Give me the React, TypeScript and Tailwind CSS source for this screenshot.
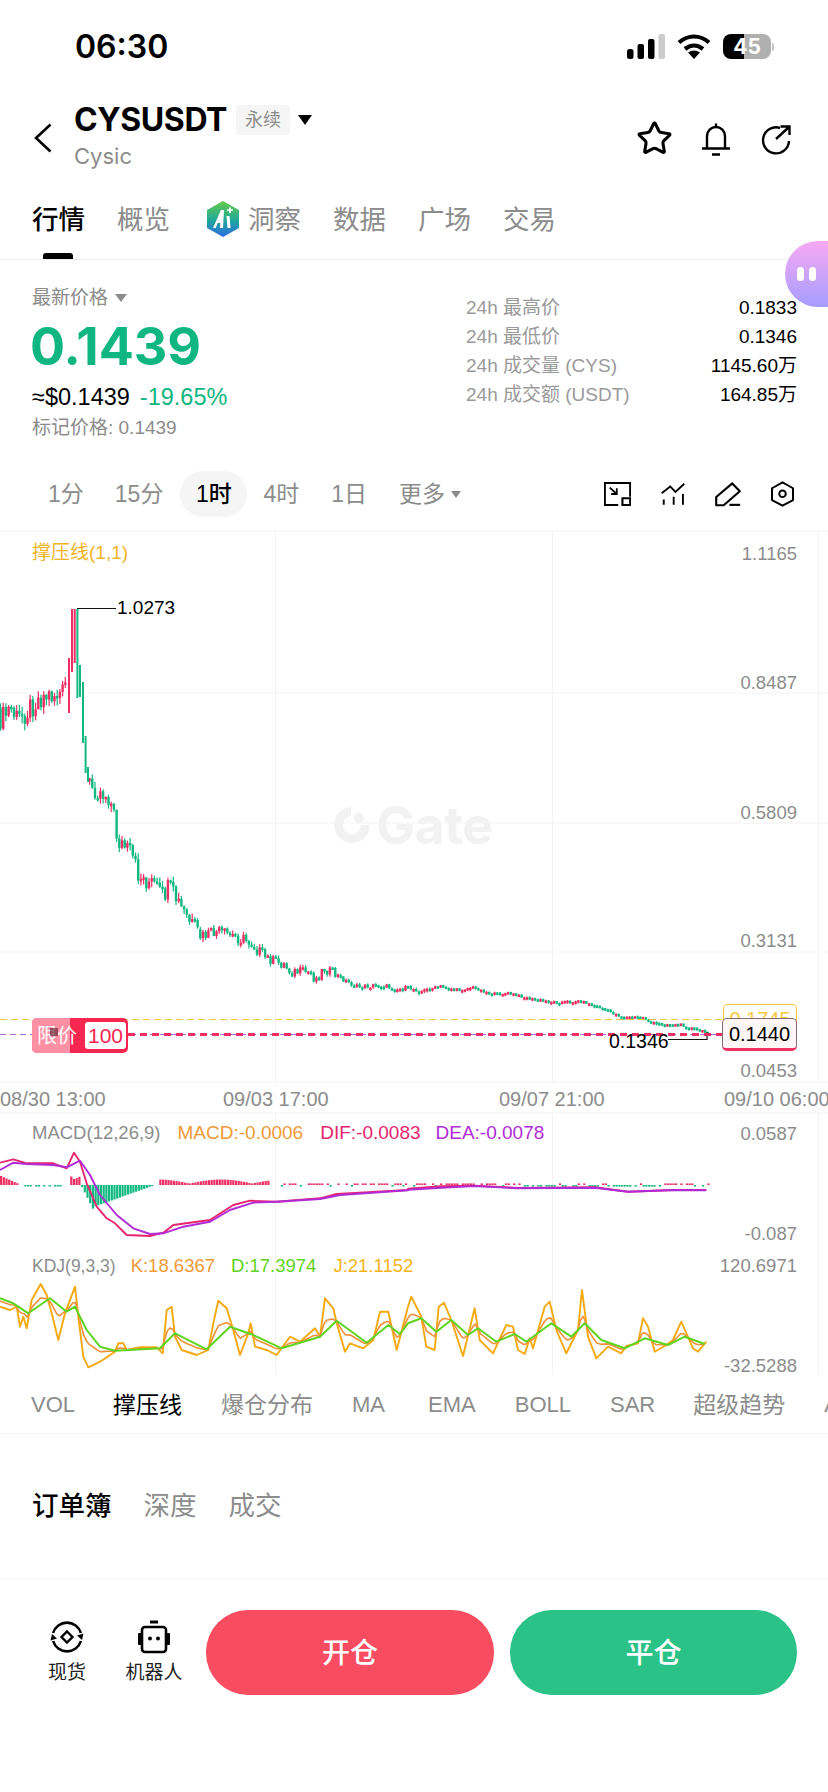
import React from "react"
import { Star } from "lucide-react"

type Pt = [number, number]

const interp = (pts: Pt[], x: number) => {
  if (x <= pts[0][0]) return pts[0][1]
  for (let i = 1; i < pts.length; i++) {
    if (x <= pts[i][0]) {
      const [x0, y0] = pts[i - 1]
      const [x1, y1] = pts[i]
      return y0 + ((y1 - y0) * (x - x0)) / (x1 - x0)
    }
  }
  return pts[pts.length - 1][1]
}

const rnd = (i: number) => {
  const v = Math.sin(i * 12.9898) * 43758.5453
  return v - Math.floor(v)
}

const PITCH = 2.7
const RED = "#ee2f63"
const GREEN = "#11b981"

// price curve read off the chart, in page pixels
const pricePts: Pt[] = [
  [0, 720], [7, 717], [13, 707], [20, 720], [30, 710], [43, 697], [67, 693], [69, 680],
  [89, 782], [100, 790], [112, 797], [117, 817], [120, 840], [133, 853], [142, 877],
  [157, 885], [165, 897], [172, 888], [185, 910], [193, 923], [203, 937], [220, 932],
  [233, 935], [253, 942], [267, 957], [287, 965], [293, 972], [313, 972], [318, 980],
  [327, 968], [347, 980], [360, 987], [383, 985], [400, 989], [413, 988], [425, 991],
  [443, 986], [461, 990], [475, 987], [495, 994], [511, 993], [535, 999], [558, 1002],
  [583, 1001], [605, 1008], [625, 1017], [645, 1017], [655, 1023], [685, 1025],
  [695, 1028], [707, 1032],
]

const spike: [number, number, number, boolean][] = [
  [69, 658, 713, true], [72, 609, 672, true], [74.7, 609, 663, true], [77.4, 609, 698, false],
  [80, 665, 697, false], [83, 682, 743, false], [85.6, 736, 773, false], [88, 767, 782, false],
]

const ampAt = (x: number) => (x < 68 ? 24 : x < 200 ? 20 : x < 270 ? 13 : x < 340 ? 10 : x < 430 ? 5 : 2.8)

function Candles() {
  const bars: React.ReactNode[] = []
  for (let i = 0; i * PITCH < 708; i++) {
    const x = i * PITCH + 0.5
    if (x > 67 && x < 89) continue
    const amp = ampAt(x)
    const open = interp(pricePts, x) + (rnd(i) - 0.5) * amp
    const close = interp(pricePts, x + PITCH) + (rnd(i + 1) - 0.5) * amp
    const up = close < open
    const top = Math.min(open, close)
    const h = Math.max(Math.abs(open - close), 2.5)
    const wickTop = top - rnd(i + 500) * amp * 0.3
    const wickBottom = top + h + rnd(i + 900) * amp * 0.3
    const c = up ? RED : GREEN
    bars.push(
      <g key={i} fill={c}>
        <rect x={x - 0.6} y={wickTop} width={1.2} height={wickBottom - wickTop} />
        <rect x={x - 1.2} y={top} width={2.4} height={h} />
      </g>
    )
  }
  spike.forEach(([x, y0, y1, up], i) => {
    bars.push(<rect key={`s${i}`} x={x - 1} y={y0} width={2} height={y1 - y0} fill={up ? RED : GREEN} />)
  })
  return <g>{bars}</g>
}

const z5 = (pts: Pt[]): Pt[] => pts.map(([x, y]) => [x / 3, y / 3 + 1110])
const z6 = (pts: Pt[]): Pt[] => pts.map(([x, y]) => [x / 3 + 408, y / 3 + 1110])
const toPath = (pts: Pt[]) => pts.map(([x, y]) => `${x.toFixed(1)},${y.toFixed(1)}`).join(" ")

const difPts = [
  ...z5([[0, 158], [40, 148], [80, 160], [160, 160], [200, 175], [222, 128], [240, 155], [260, 220], [290, 290], [320, 325], [345, 340], [380, 375], [450, 378], [490, 368], [520, 345], [630, 330], [700, 285], [750, 272], [830, 275], [960, 265], [1010, 252], [1224, 240]]),
  ...z6([[0, 236], [100, 229], [200, 227], [330, 234], [560, 232], [660, 245], [800, 240], [895, 240]]),
]
const deaPts = [
  ...z5([[0, 180], [40, 158], [80, 162], [160, 165], [200, 172], [240, 152], [270, 195], [300, 255], [350, 315], [400, 355], [450, 372], [490, 370], [550, 350], [630, 335], [690, 300], [760, 278], [830, 275], [960, 267], [1020, 255], [1224, 241]]),
  ...z6([[0, 239], [100, 233], [200, 228], [330, 235], [560, 233], [660, 245], [800, 240], [895, 241]]),
]

const jPts = [
  ...z5([[0, 590], [30, 600], [50, 590], [60, 650], [70, 620], [80, 655], [95, 570], [122, 522], [140, 555], [155, 610], [175, 690], [195, 610], [225, 530], [235, 620], [250, 740], [265, 772], [300, 755], [345, 725], [355, 700], [370, 700], [380, 720], [420, 712], [470, 712], [488, 730], [500, 600], [515, 590], [525, 680], [545, 720], [590, 735], [625, 720], [640, 640], [655, 572], [680, 595], [700, 660], [720, 735], [745, 670], [752, 640], [765, 710], [800, 720], [830, 735], [870, 680], [900, 695], [945, 655], [960, 680], [975, 565], [1000, 595], [1010, 640], [1035, 725], [1050, 700], [1090, 715], [1120, 690], [1140, 605], [1165, 605], [1190, 720], [1224, 590]]),
  ...z6([[10, 560], [40, 620], [55, 710], [80, 720], [92, 590], [108, 578], [130, 630], [165, 738], [200, 595], [215, 690], [255, 730], [295, 645], [315, 650], [330, 720], [350, 732], [365, 685], [375, 715], [410, 590], [425, 575], [445, 660], [475, 730], [510, 660], [522, 540], [540, 680], [565, 745], [600, 710], [640, 730], [655, 708], [690, 700], [705, 625], [720, 650], [740, 725], [775, 705], [795, 690], [820, 635], [855, 715], [870, 725], [895, 695]]),
]
const dPts = [
  ...z5([[0, 565], [40, 580], [85, 610], [150, 565], [200, 605], [225, 590], [260, 660], [300, 710], [345, 722], [480, 715], [525, 670], [620, 718], [690, 650], [760, 675], [845, 715], [960, 680], [1010, 632], [1100, 698], [1165, 645], [1200, 672], [1224, 640]]),
  ...z6([[40, 625], [85, 665], [130, 630], [180, 675], [210, 655], [265, 695], [320, 672], [355, 695], [430, 640], [490, 680], [530, 640], [580, 690], [650, 715], [710, 685], [780, 705], [830, 680], [890, 702]]),
]
// KDJ: J = 3K - 2D, so K follows from the other two
const kPts: Pt[] = []
for (let x = 0; x <= 705; x += PITCH) {
  kPts.push([x, (interp(jPts, x) + 2 * interp(dPts, x)) / 3])
}

function Histogram() {
  const bars: React.ReactNode[] = []
  for (let i = 0; i * PITCH < 708; i++) {
    const x = i * PITCH
    let h = 0
    let up = true
    if (x < 18) h = 8 * (1 - x / 18) + 1
    else if (x < 24) h = 0
    else if (x < 68) { h = rnd(i) > 0.5 ? 1.5 : 0; up = false }
    else if (x >= 70 && x < 79) h = 6 + rnd(i) * 5
    else if (x >= 81 && x < 154) {
      up = false
      h = x < 92 ? (x - 81) * 2 + 2 : x < 120 ? 22 - (x - 92) * 0.35 : 12 * (1 - (x - 120) / 34)
    } else if (x >= 157 && x < 270) h = 1.5 + 4 * Math.abs(Math.sin(x / 20))
    else if (x >= 280) {
      h = rnd(i) > 0.35 ? 1.6 : 0
      up = x < 510 || x > 660 ? rnd(i + 40) > 0.2 : rnd(i + 40) > 0.7
    }
    if (h <= 0) continue
    bars.push(
      <rect key={i} x={x} y={up ? 1185 - h : 1185} width={2.2} height={h} fill={up ? RED : GREEN} />
    )
  }
  return <g>{bars}</g>
}

function ChartArt() {
  return (
    <svg className="absolute left-0 top-0" width={828} height={845} viewBox="0 530 828 845">
      <g stroke="#f3f3f3" strokeWidth={1}>
        <path d="M0 531H828M0 693H828M0 823H828M0 952H828M0 1082H828M0 1113H828" />
        <path d="M275.5 531V1082M552.5 531V1082M818.5 531V1082M275.5 1113V1375M552.5 1113V1375M818.5 1113V1375" />
      </g>
      <g fill="#f2f2f2">
        <path d="M351 807a18 18 0 1 0 19 18h-9a9 9 0 1 1-10-9z" />
        <circle cx="359" cy="818" r="5" />
      </g>
      <Candles />
      <path d="M77 608.5H116" stroke="#111" strokeWidth={1.2} fill="none" />
      <path d="M668 1039.5H707V1032" stroke="#111" strokeWidth={1.2} fill="none" />
      <path d="M0 1019.5H722" stroke="#f5c842" strokeWidth={1.2} strokeDasharray="7 4" />
      <path d="M0 1034.5H722" stroke="#b06ae0" strokeWidth={1.2} strokeDasharray="6 4" />
      <path d="M128 1034.5H722" stroke={RED} strokeWidth={3} strokeDasharray="7 5" />
      <Histogram />
      <polyline points={toPath(difPts)} fill="none" stroke="#e8246f" strokeWidth={1.9} strokeLinejoin="round" />
      <polyline points={toPath(deaPts)} fill="none" stroke="#b02bd6" strokeWidth={1.9} strokeLinejoin="round" />
      <polyline points={toPath(jPts)} fill="none" stroke="#f5a90f" strokeWidth={1.9} strokeLinejoin="round" />
      <polyline points={toPath(kPts)} fill="none" stroke="#f0913a" strokeWidth={1.6} strokeLinejoin="round" />
      <polyline points={toPath(dPts)} fill="none" stroke="#5fd420" strokeWidth={2} strokeLinejoin="round" />
    </svg>
  )
}

function StatusBar() {
  return (
    <div className="flex h-[94px] items-start justify-between pl-[75px] pr-[54px] pt-[27px]">
      <span className="text-[32px] font-semibold leading-10 text-black">06:30</span>
      <div className="flex items-center gap-3 pt-[7px]">
        <svg width={38} height={25} viewBox="0 0 38 25">
          <rect x={0} y={15} width={6.5} height={10} rx={2.5} fill="#000" />
          <rect x={10.5} y={10} width={6.5} height={15} rx={2} fill="#000" />
          <rect x={21} y={5} width={6.5} height={20} rx={2} fill="#000" />
          <rect x={31.5} y={0} width={6.5} height={25} rx={2} fill="#ccc" />
        </svg>
        <svg width={34} height={25} viewBox="0 0 34 25">
          <path d="M2 8.5C11 .5 23 .5 32 8.5" fill="none" stroke="#000" strokeWidth={4.2} />
          <path d="M8 15C13.500 10.500 20.500 10.500 26 15" fill="none" stroke="#000" strokeWidth={4.2} />
          <path d="M11 18.500Q17 14.500 23 18.500L17 25z" fill="#000" />
        </svg>
        <div className="flex items-center gap-[1px]">
          <div className="relative flex h-[25px] w-[48px] overflow-hidden rounded-[8px]">
            <div className="h-full w-[21px] bg-black" />
            <div className="h-full flex-1 bg-[#b0b0b0]" />
            <span className="absolute inset-0 flex items-center justify-center text-[21px] font-bold text-white">45</span>
          </div>
          <div className="h-[8px] w-[2px] rounded-r bg-[#c4c4c4]" />
        </div>
      </div>
    </div>
  )
}

function Header() {
  return (
    <div className="flex h-[96px] items-center pr-[36px]">
      <svg width={20} height={30} viewBox="0 0 20 30" fill="none" stroke="#000" strokeWidth={2.6} className="ml-[33px] mt-[-8px]">
        <path d="M17.500 1.500L3 15L17.500 28.500" />
      </svg>
      <div className="ml-[21px] mt-[-14px] flex flex-col">
        <div className="flex items-center">
          <span className="text-[32px] font-bold leading-[38px] tracking-[-0.4px] text-black">CYSUSDT</span>
          <span className="ml-[9px] flex h-[30px] w-[54px] items-center justify-center rounded bg-[#f5f5f5] text-[18px] text-[#8c8c8c]">永续</span>
          <span className="ml-[8px] h-0 w-0 border-x-[7px] border-t-[10px] border-x-transparent border-t-black" />
        </div>
        <span className="mt-[3px] text-[22px] leading-[28px] text-[#8c8c8c]">Cysic</span>
      </div>
      <div className="ml-auto mt-[-7px] flex items-center">
        <Star size={37} strokeWidth={2} className="text-black" />
        <svg width={32} height={34} viewBox="0 0 32 34" fill="none" stroke="#000" strokeWidth={2.4} className="ml-[27px]">
          <path d="M7 26V14a9 9 0 0 1 18 0V26" />
          <path d="M2 26.500H30M16 1.500V5M12 32.500H20" />
        </svg>
        <svg width={32} height={32} viewBox="0 0 32 32" fill="none" stroke="#000" strokeWidth={2.4} className="ml-[28px]">
          <path d="M20 5A13 13 0 1 0 29 18" />
          <path d="M16 16L29 4M20.500 3.500H29.500V12" />
        </svg>
      </div>
    </div>
  )
}

function AiLogo() {
  return (
    <svg width={34} height={36} viewBox="0 0 34 36" className="mr-[8px]">
      <defs>
        <linearGradient id="aiGrad" x1="0" y1="0" x2="0" y2="1">
          <stop offset="0%" stopColor="#63c94e" />
          <stop offset="55%" stopColor="#1fa79c" />
          <stop offset="100%" stopColor="#2b6fe0" />
        </linearGradient>
      </defs>
      <path d="M17 1L32 9.500V26.500L17 35L2 26.500V9.500Z" fill="url(#aiGrad)" stroke="url(#aiGrad)" strokeWidth={2} strokeLinejoin="round" />
      <path d="M7 27L15 9H18L17 27H14L14.300 22H11.500L9.800 27Z" fill="#fff" />
      <path d="M20.500 15H23.500L24.500 27H21.500Z" fill="#fff" />
      <path d="M24 6.500V12M21.300 9.200H26.800" stroke="#fff" strokeWidth={1.800} />
    </svg>
  )
}

function TopTabs() {
  return (
    <div className="relative flex h-[70px] items-start gap-[32px] border-b border-[#eeeeee] pl-[32px] pt-[11px] text-[26.5px] leading-9 text-[#8c8c8c]">
      <span className="font-medium text-black">行情</span>
      <span>概览</span>
      <span className="flex items-center">
        <span className="ml-[4px]"><AiLogo /></span>
        洞察
      </span>
      <span>数据</span>
      <span>广场</span>
      <span>交易</span>
      <div className="absolute bottom-0 left-[43px] h-[6px] w-[30px] rounded-t-[3px] bg-black" />
      <div className="absolute right-0 top-[51px] flex h-[66px] w-[43px] items-center gap-[5px] rounded-l-[33px] bg-gradient-to-b from-[#f6a8f2] to-[#a59dff] pl-[12px]">
        <span className="h-[14px] w-[7px] rounded-full bg-white" />
        <span className="h-[14px] w-[7px] rounded-full bg-white" />
      </div>
    </div>
  )
}

const stats = [
  { label: "24h 最高价", value: "0.1833" },
  { label: "24h 最低价", value: "0.1346" },
  { label: "24h 成交量 (CYS)", value: "1145.60万" },
  { label: "24h 成交额 (USDT)", value: "164.85万" },
]

function PriceBlock() {
  return (
    <div className="flex h-[211px] justify-between pl-[32px] pr-[31px] font-['Liberation_Sans','Noto_Sans_CJK_SC',sans-serif]">
      <div className="flex flex-col pt-[23px]">
        <div className="flex h-[30px] items-center text-[19px] text-[#8c8c8c]">
          最新价格
          <span className="ml-[7px] h-0 w-0 border-x-[6px] border-t-[8px] border-x-transparent border-t-[#8c8c8c]" />
        </div>
        <div className="ml-[-2px] mt-[4px] font-['Inter'] text-[52px] font-bold leading-[60px] text-[#0fb67f]">0.1439</div>
        <div className="mt-[6px] flex h-[30px] items-center text-[23.5px]">
          <span className="text-black">≈$0.1439</span>
          <span className="ml-[10px] text-[#0fb67f]">-19.65%</span>
        </div>
        <div className="mt-[2px] text-[19px] leading-[26px] text-[#8c8c8c]">标记价格: 0.1439</div>
      </div>
      <div className="flex w-[331px] flex-col pt-[34px]">
        {stats.map(s => (
          <div key={s.label} className="flex h-[29px] items-center justify-between text-[19px]">
            <span className="text-[#9a9a9a]">{s.label}</span>
            <span className="text-black">{s.value}</span>
          </div>
        ))}
      </div>
    </div>
  )
}

function IntervalRow() {
  return (
    <div className="flex h-[46px] items-center font-['Liberation_Sans','Noto_Sans_CJK_SC',sans-serif] text-[23px] text-[#8c8c8c]">
      <span className="ml-[48px]">1分</span>
      <span className="ml-[31px]">15分</span>
      <span className="ml-[17px] flex h-[46px] w-[67px] items-center justify-center rounded-[23px] bg-[#f5f5f5] font-medium text-black">1时</span>
      <span className="ml-[16px]">4时</span>
      <span className="ml-[32px]">1日</span>
      <span className="ml-[32px]">更多</span>
      <span className="ml-[6px] h-0 w-0 border-x-[5px] border-t-[7px] border-x-transparent border-t-[#8c8c8c]" />
      <div className="ml-auto mr-[34px] flex items-center gap-[30px]">
        <svg width={27} height={24} viewBox="34 38 76 68" fill="none" stroke="#000" strokeWidth={6}>
          <path d="M74 103H36V41H108V80" />
          <path d="M86 84H108V103H86Z" />
          <path d="M50 54L70 72M70 56V72H54" strokeWidth={5} />
        </svg>
        <svg width={24} height={24} viewBox="198 38 70 68" fill="none" stroke="#000" strokeWidth={5.500}>
          <path d="M200 70L225 50L240 66L266 42" />
          <path d="M206 88V103M235 80V103M262 72V103" />
        </svg>
        <svg width={26} height={25} viewBox="362 36 72 70" fill="none" stroke="#000" strokeWidth={6} strokeLinejoin="round">
          <path d="M365 101V78L410 40L431 62L386 101Z" />
          <path d="M402 100H432" />
        </svg>
        <svg width={23} height={26} viewBox="524 33 70 77" fill="none" stroke="#000" strokeWidth={6} strokeLinejoin="round">
          <path d="M559 36L591 54V90L559 107L527 90V54Z" />
          <circle cx={559} cy={71} r={10} />
        </svg>
      </div>
    </div>
  )
}

function Chart() {
  return (
    <div className="relative mt-[13px] h-[845px] whitespace-nowrap font-['Liberation_Sans','Noto_Sans_CJK_SC',sans-serif] text-[18.5px] leading-6 text-[#8c8c8c]">
      <ChartArt />
      <span className="absolute left-[32px] top-[11px] text-[19px] text-[#f0b429]">撑压线(1,1)</span>
      <span className="absolute left-[117px] top-[66px] text-[19px] text-black">1.0273</span>
      <span className="absolute left-[376px] top-[268px] font-['Inter'] text-[52px] font-bold leading-[56px] tracking-[-0.5px] text-[#f2f2f2]">Gate</span>

      <span className="absolute right-[31px] top-[12px]">1.1165</span>
      <span className="absolute right-[31px] top-[141px]">0.8487</span>
      <span className="absolute right-[31px] top-[271px]">0.5809</span>
      <span className="absolute right-[31px] top-[399px]">0.3131</span>
      <span className="absolute right-[31px] top-[529px]">0.0453</span>
      <span className="absolute right-[31px] top-[592px]">0.0587</span>
      <span className="absolute right-[31px] top-[692px]">-0.087</span>
      <span className="absolute right-[31px] top-[724px]">120.6971</span>
      <span className="absolute right-[31px] top-[824px]">-32.5288</span>

      <span className="absolute left-0 top-[557px] text-[20px]">08/30 13:00</span>
      <span className="absolute left-[223px] top-[557px] text-[20px]">09/03 17:00</span>
      <span className="absolute left-[499px] top-[557px] text-[20px]">09/07 21:00</span>
      <span className="absolute left-[724px] top-[557px] text-[20px]">09/10 06:00</span>

      <div className="absolute left-[32px] top-[591px] flex text-[19px]">
        <span className="text-[18.5px]">MACD(12,26,9)</span>
        <span className="ml-[17px] text-[#f09a37]">MACD:-0.0006</span>
        <span className="ml-[17px] text-[#e5256f]">DIF:-0.0083</span>
        <span className="ml-[15px] text-[#b02bd6]">DEA:-0.0078</span>
      </div>
      <div className="absolute left-[32px] top-[724px] flex text-[18.5px]">
        <span className="text-[17.5px]">KDJ(9,3,3)</span>
        <span className="ml-[15px] text-[#f09a37]">K:18.6367</span>
        <span className="ml-[16px] text-[#5fd420]">D:17.3974</span>
        <span className="ml-[17px] text-[#f5b316]">J:21.1152</span>
      </div>

      <div className="absolute left-[32px] top-[488px] flex h-[35px] w-[96px] items-center overflow-hidden rounded-[5px] bg-[#f5264f] text-[20px] text-white">
        <span className="relative flex h-full w-[38px] items-center bg-[#ff8fa3] pl-[5px]">
          限价
          <span className="absolute left-[18px] top-[10px] h-[8px] w-[8px] bg-[#6b2b3a]/70" />
        </span>
        <span className="ml-[15px] flex h-[27px] w-[41px] items-center justify-center rounded-[3px] bg-white text-[21px] text-[#f5264f]">100</span>
      </div>

      <div className="absolute left-[723px] top-[474px] flex h-[30px] w-[74px] justify-center rounded-[4px] border border-[#f5c842] bg-white pt-[2px] text-[20px] text-[#f5c842]">0.1745</div>
      <div className="absolute left-[722px] top-[488px] flex h-[33px] w-[75px] items-center justify-center rounded-[5px] border border-b-[3px] border-[#8a6a70] border-b-[#ee2f63] bg-[#fff6f7] text-[20px] text-black">0.1440</div>
      <span className="absolute left-[609px] top-[499px] text-[19.5px] text-black">0.1346</span>
    </div>
  )
}

function IndicatorTabs() {
  return (
    <div className="flex h-[59px] items-start overflow-hidden border-b border-[#f5f5f5] pt-[15px] font-['Liberation_Sans','Noto_Sans_CJK_SC',sans-serif] text-[22px] leading-[30px] whitespace-nowrap text-[#8c8c8c]">
      <span className="ml-[31px]">VOL</span>
      <span className="ml-[38px] text-[23px] text-black">撑压线</span>
      <span className="ml-[39px] text-[23px]">爆仓分布</span>
      <span className="ml-[39px]">MA</span>
      <span className="ml-[43px]">EMA</span>
      <span className="ml-[39px]">BOLL</span>
      <span className="ml-[39px]">SAR</span>
      <span className="ml-[38px] text-[23px]">超级趋势</span>
      <span className="ml-[39px]">ATR</span>
    </div>
  )
}

function OrderTabs() {
  return (
    <div className="flex h-[146px] items-start gap-[32px] border-b border-[#f5f5f5] pl-[32px] pt-[53px] text-[26.5px] leading-9 text-[#8c8c8c]">
      <span className="font-medium text-black">订单簿</span>
      <span>深度</span>
      <span>成交</span>
    </div>
  )
}

function BottomBar() {
  return (
    <div className="flex items-start pt-[30px]">
      <div className="ml-[48px] mt-[10px] flex w-[38px] flex-col items-center">
        <svg width={34} height={34} viewBox="0 0 34 34" fill="none" stroke="#000" strokeWidth={2.6}>
          <path d="M3.100 13A14.500 14.500 0 0 1 30.900 13" />
          <path d="M30.900 21A14.500 14.500 0 0 1 3.100 21" />
          <path d="M7 18.500L0.500 20.500L2 14Z" fill="#000" stroke="none" />
          <path d="M27 15.500L33.500 13.500L32 20Z" fill="#000" stroke="none" />
          <path d="M17 11.500L22.500 17L17 22.500L11.500 17Z" strokeWidth={2.4} />
        </svg>
        <span className="mt-[7px] whitespace-nowrap text-[19px] leading-6 text-[#222]">现货</span>
      </div>
      <div className="ml-[39px] mt-[10px] flex w-[58px] flex-col items-center">
        <svg width={34} height={34} viewBox="0 0 34 34">
          <path d="M13 0.500H21V3.500H13Z" fill="#000" />
          <rect x={5} y={7} width={24} height={25} rx={3} fill="none" stroke="#000" strokeWidth={2.6} />
          <path d="M2 13H4.500V25H2Q1 25 1 24V14Q1 13 2 13ZM29.500 13H32Q33 13 33 14V24Q33 25 32 25H29.500Z" fill="#000" />
          <circle cx={13} cy={18.500} r={2} fill="#000" />
          <circle cx={21} cy={18.500} r={2} fill="#000" />
        </svg>
        <span className="mt-[7px] whitespace-nowrap text-[19px] leading-6 text-[#222]">机器人</span>
      </div>
      <button className="ml-[23px] flex h-[85px] w-[288px] items-center justify-center rounded-[42px] bg-[#f84c61] text-[28px] font-medium text-white">开仓</button>
      <button className="ml-[16px] flex h-[85px] w-[287px] items-center justify-center rounded-[42px] bg-[#2bc287] text-[28px] font-medium text-white">平仓</button>
    </div>
  )
}

export default function App() {
  return (
    <div className="h-[1792px] w-[828px] overflow-hidden bg-white font-['Inter','Noto_Sans_CJK_SC',sans-serif]">
      <StatusBar />
      <Header />
      <TopTabs />
      <PriceBlock />
      <IntervalRow />
      <Chart />
      <IndicatorTabs />
      <OrderTabs />
      <BottomBar />
    </div>
  )
}
